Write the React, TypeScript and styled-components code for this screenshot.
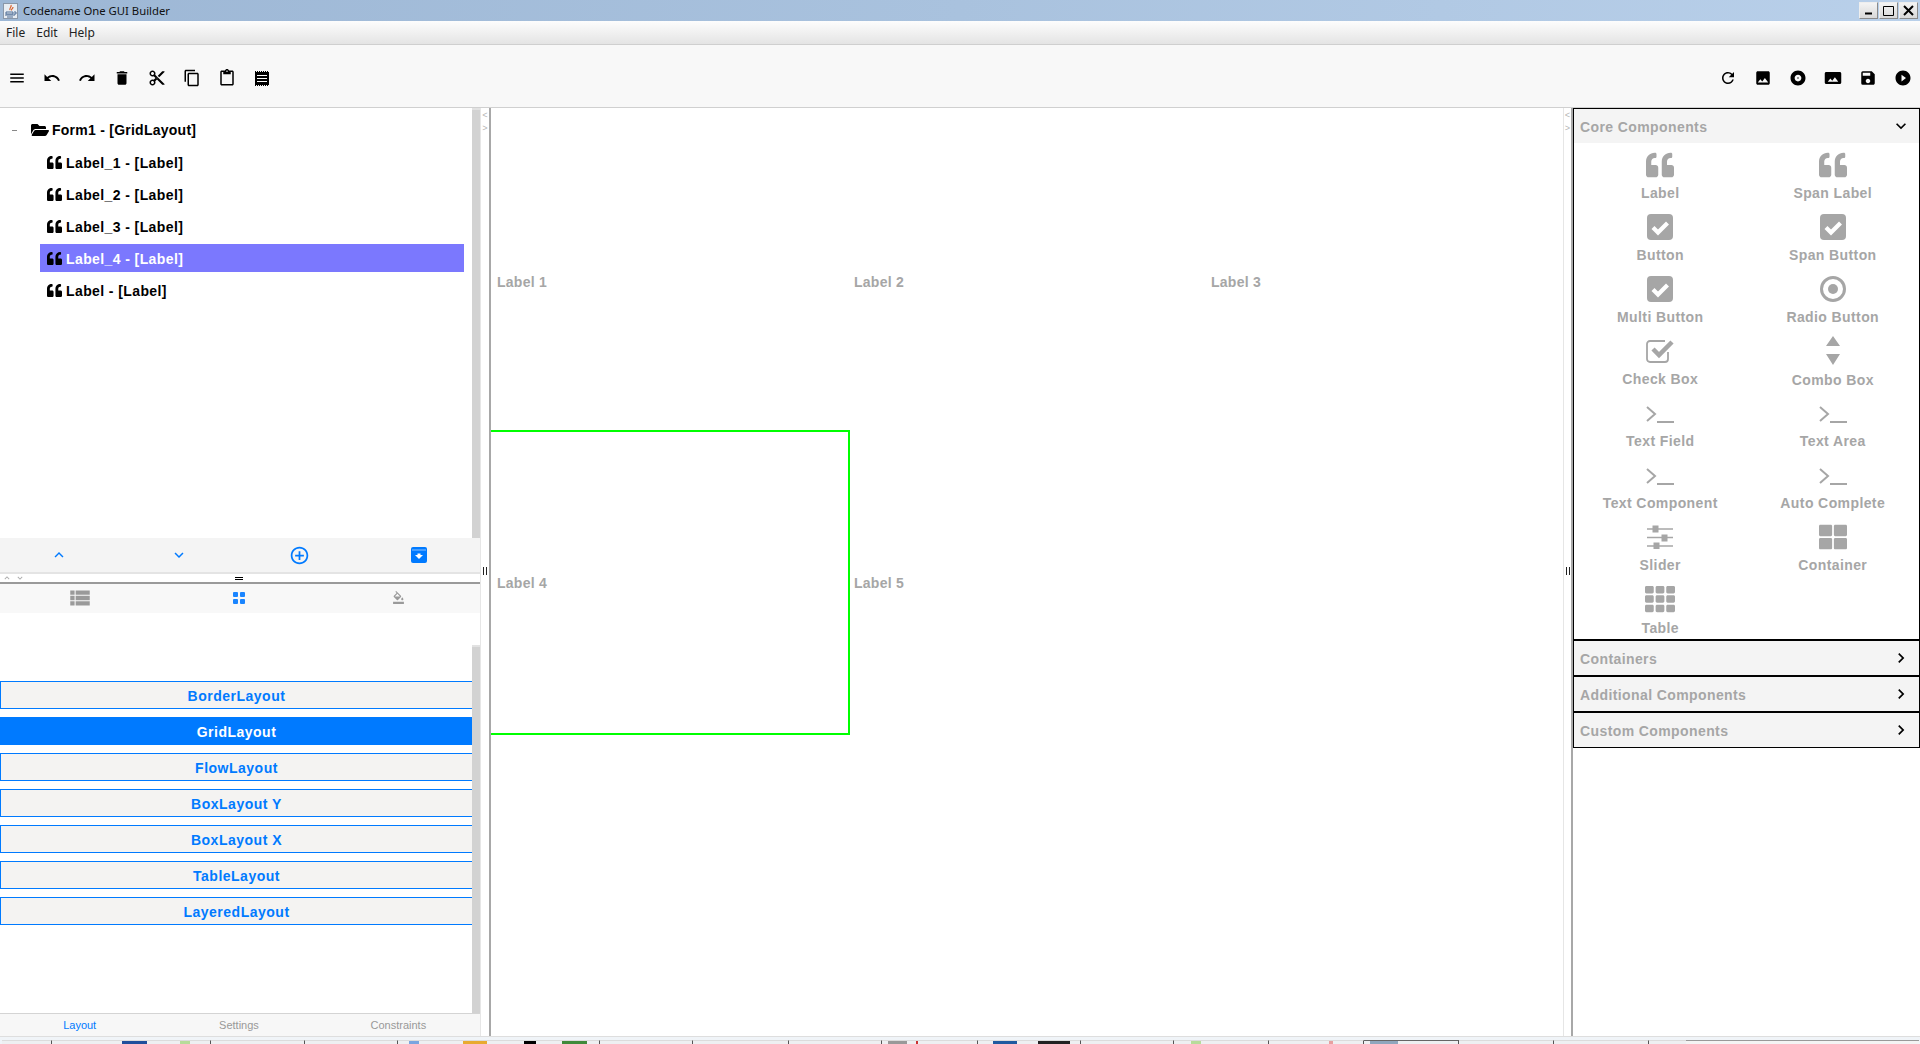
import React from 'react';
import styled, { createGlobalStyle } from 'styled-components';
import {
  MdMenu, MdUndo, MdRedo, MdDelete, MdContentCut, MdContentCopy, MdContentPaste,
  MdRefresh, MdPhoto, MdAlbum, MdPanorama, MdSave, MdPlayCircleFilled,
  MdKeyboardArrowUp, MdKeyboardArrowDown, MdKeyboardArrowRight, MdAddCircleOutline,
  MdViewList, MdFormatColorFill,
} from 'react-icons/md';
import { FaQuoteLeft, FaFolderOpen, FaThLarge, FaTh } from 'react-icons/fa';

const BLUE = '#007aff';
const GREY = '#a6a6a6';

const GlobalStyle = createGlobalStyle`
  html, body { margin: 0; padding: 0; background: #fff; overflow: hidden; }
  * { box-sizing: border-box; }
`;

const Window = styled.div`
  width: 1920px;
  height: 1044px;
  display: flex;
  flex-direction: column;
  overflow: hidden;
  font-family: "Liberation Sans", Arial, sans-serif;
`;

const TitleBar = styled.div`
  height: 21px;
  flex: none;
  display: flex;
  align-items: center;
  padding: 0 2px 0 3px;
  background: linear-gradient(to right, #9db7d5, #a9c2de 50%, #b9d0ea);
`;

const TitleText = styled.span`
  margin-left: 5px;
  flex: 1;
  font: 11.3px "Noto Sans", sans-serif;
  color: #111;
`;

const WinButtons = styled.div`
  display: flex;
  gap: 1px;
`;

const WinButton = styled.div`
  width: 19px;
  height: 17px;
  display: flex;
  align-items: center;
  justify-content: center;
  background: linear-gradient(#f4f4f4, #d8d8d8);
  border: 1px solid #8a8a8a;
  border-top-color: #eee;
  border-left-color: #eee;
`;

const MenuBar = styled.div`
  height: 24px;
  flex: none;
  display: flex;
  align-items: center;
  gap: 11px;
  padding-left: 6px;
  background: linear-gradient(#fdfdfd, #e4e4e4);
  border-bottom: 1px solid #cfcfcf;
  font: 12px "Noto Sans", sans-serif;
  color: #222;
`;

const Toolbar = styled.div`
  height: 63px;
  flex: none;
  display: flex;
  align-items: center;
  justify-content: space-between;
  padding: 4px 8px 0 8px;
  background: #f8f8f8;
  border-bottom: 1px solid #d0d0d0;
`;

const ToolGroup = styled.div`
  display: flex;
  gap: 17px;
`;

const ToolIcon = styled.span`
  width: 18px;
  height: 18px;
  display: flex;
  align-items: center;
  justify-content: center;
  font-size: 18px;
  color: #000;
`;

const Body = styled.div`
  flex: 1;
  min-height: 0;
  display: flex;
`;

const LeftPanel = styled.div`
  width: 480px;
  flex: none;
  display: flex;
  flex-direction: column;
`;

const TreeArea = styled.div`
  height: 430px;
  flex: none;
  display: flex;
`;

const Tree = styled.div`
  flex: 1;
  display: flex;
  flex-direction: column;
  gap: 4px;
  padding: 6px 8px 0 0;
`;

const RootRow = styled.div`
  height: 30px;
  display: flex;
  align-items: center;
  padding: 2px 0 0 12px;
  font-size: 14px;
  font-weight: bold;
  letter-spacing: 0.25px;
  color: #000;
`;

const Toggle = styled.span`
  width: 5px;
  height: 1px;
  margin-right: 14px;
  background: #888;
`;

const TreeRow = styled.div<{ $selected?: boolean }>`
  height: 28px;
  margin-left: 40px;
  display: flex;
  align-items: center;
  padding: 1px 0 0 7px;
  gap: 4px;
  font-size: 14px;
  font-weight: bold;
  letter-spacing: 0.4px;
  color: ${(p) => (p.$selected ? '#fff' : '#000')};
  background: ${(p) => (p.$selected ? '#7b78fe' : 'transparent')};
`;

const TreeIcon = styled.span`
  display: flex;
  font-size: 15px;
  color: #000;
`;

const FolderIcon = styled(TreeIcon)`
  font-size: 18px;
  margin-right: 3px;
`;

const ScrollTrack = styled.div<{ $top?: number }>`
  width: 8px;
  flex: none;
  padding-top: ${(p) => p.$top || 0}px;
  display: flex;
`;

const ScrollThumb = styled.div`
  flex: 1;
  background: #d2d2d2;
  border-top: 2px solid #e2e2e2;
`;

const ActionBar = styled.div`
  height: 34px;
  flex: none;
  display: grid;
  grid-template-columns: repeat(4, 1fr);
  background: #f4f4f4;
`;

const TabBar = styled.div`
  height: 29px;
  flex: none;
  display: grid;
  grid-template-columns: repeat(3, 1fr);
  padding: 0 2px 2px 0;
  background: #f8f8f8;
`;

const ActionCell = styled.div<{ $size: number }>`
  display: flex;
  align-items: center;
  justify-content: center;
  padding-right: 2px;
  color: ${BLUE};
  font-size: ${(p) => p.$size}px;
`;

const TabCell = styled.div<{ $color: string; $size: number }>`
  display: flex;
  align-items: center;
  justify-content: center;
  color: ${(p) => p.$color};
  font-size: ${(p) => p.$size}px;
`;

const HSplitter = styled.div`
  height: 12px;
  flex: none;
  display: flex;
  align-items: center;
  padding-left: 2px;
  gap: 3px;
  border-top: 2px solid #e4e4e4;
  border-bottom: 2px solid #9a9a9a;
  color: #aaa;
  font-size: 10px;
`;

const GripH = styled.span`
  width: 8px;
  height: 3px;
  margin-left: 207px;
  border-top: 1px solid #000;
  border-bottom: 1px solid #000;
`;

const LayoutArea = styled.div`
  flex: 1;
  min-height: 0;
  display: flex;
`;

const LayoutList = styled.div`
  flex: 1;
  display: flex;
  flex-direction: column;
  gap: 8px;
  padding-top: 68px;
`;

const LayoutButton = styled.div<{ $active?: boolean }>`
  height: 28px;
  display: flex;
  align-items: center;
  justify-content: center;
  padding-top: 1px;
  font-size: 14px;
  font-weight: bold;
  letter-spacing: 0.5px;
  color: ${(p) => (p.$active ? '#fff' : BLUE)};
  background: ${(p) => (p.$active ? BLUE : '#f4f3f2')};
  border: 1px solid ${BLUE};
  border-right: none;
`;

const BottomTabs = styled.div`
  height: 23px;
  flex: none;
  display: grid;
  grid-template-columns: repeat(3, 1fr);
  padding-right: 2px;
  background: #f7f7f7;
  border-top: 1px solid #d4d4d4;
`;

const BottomTab = styled.div<{ $active?: boolean }>`
  display: flex;
  align-items: center;
  justify-content: center;
  font-size: 11px;
  color: ${(p) => (p.$active ? BLUE : '#999')};
`;

const VSplitter = styled.div<{ $width: number }>`
  width: ${(p) => p.$width}px;
  flex: none;
  display: flex;
  flex-direction: column;
  align-items: center;
  padding-top: 2px;
  border-left: 1px solid #e6e6e6;
  border-right: 2px solid #a8a8a8;
  color: #b5b5b5;
  font: 9px/13px "Liberation Mono", monospace;
`;

const GripV = styled.span`
  width: 4px;
  height: 8px;
  margin-top: 431px;
  border-left: 1px solid #222;
  border-right: 1px solid #222;
`;

const Canvas = styled.div`
  flex: 1;
  min-width: 0;
  display: grid;
  grid-template-columns: repeat(3, 357px);
  grid-auto-rows: 305px;
  padding-top: 17px;
`;

const Cell = styled.div<{ $selected?: boolean; $firstRow?: boolean }>`
  display: flex;
  align-items: center;
  padding: ${(p) => (p.$firstRow ? 9 : 0)}px 0 0 6px;
  margin-right: ${(p) => (p.$selected ? -2 : 0)}px;
  border: 2px solid ${(p) => (p.$selected ? '#00ff00' : 'transparent')};
  border-left: none;
  font-size: 14px;
  font-weight: bold;
  letter-spacing: 0.25px;
  color: ${GREY};
`;

const RightPanel = styled.div`
  width: 347px;
  flex: none;
`;

const Accordion = styled.div`
  border: 1px solid #000;
  border-bottom: none;
`;

const Section = styled.div`
  border-bottom: 2px solid #000;
  &:last-child { border-bottom-width: 1px; }
`;

const SectionHeader = styled.div`
  height: 34px;
  display: flex;
  align-items: center;
  justify-content: space-between;
  padding: 1px 8px 0 6px;
  background: #f4f4f4;
  font-size: 14px;
  font-weight: bold;
  letter-spacing: 0.4px;
  color: ${GREY};
`;

const Chevron = styled.span`
  display: flex;
  margin-top: -2px;
  font-size: 20px;
  color: #000;
`;

const Palette = styled.div`
  display: grid;
  grid-template-columns: 1fr 1fr;
  row-gap: 10px;
  padding: 7px 0 3px;
`;

const PaletteItem = styled.div`
  height: 52px;
  display: flex;
  flex-direction: column;
  align-items: center;
`;

const PaletteIcon = styled.div`
  height: 30px;
  display: flex;
  align-items: center;
  justify-content: center;
  font-size: 28px;
  color: ${GREY};
`;

const PaletteLabel = styled.div`
  margin-top: 5px;
  line-height: 18px;
  font-size: 14px;
  font-weight: bold;
  letter-spacing: 0.4px;
  color: ${GREY};
`;

const TaskBar = styled.div`
  height: 8px;
  flex: none;
  display: flex;
  align-items: flex-end;
  padding-left: 2px;
  background: #f0f4f8;
  border-top: 1px solid #dedede;
`;

const TaskButton = styled.div<{ $width: number; $kind: string }>`
  width: ${(p) => p.$width}px;
  height: 4px;
  flex: none;
  display: flex;
  background: ${(p) => (p.$kind === 'tray' ? '#f4f4f4' : '#eef0f2')};
  border-top: 1px solid ${(p) => (p.$kind === 'active' ? '#666' : p.$kind === 'tray' ? '#999' : '#dcdcdc')};
  border-right: ${(p) => (p.$kind === 'tray' || p.$kind === 'plain' ? 'none' : '1px solid #555')};
`;

const TaskTip = styled.span<{ $gap: number; $width: number; $color: string }>`
  margin-left: ${(p) => p.$gap}px;
  width: ${(p) => p.$width}px;
  background: ${(p) => p.$color};
`;

// small drawings that the icon packages don't have
const JavaIcon = () => (
  <svg width="15" height="16" viewBox="0 0 15 16">
    <rect x="0.5" y="0.5" width="14" height="15" fill="#e8edf3" stroke="#8a97a8" />
    <path d="M8 2c1 2-2 3-1 5M10 4c0 2-2 2-1.5 3.5" stroke="#d9602a" strokeWidth="1.2" fill="none" />
    <path d="M3 9h7v2H3zM2 12h10M4 14h6M11 9h2v2h-2" stroke="#4a6a94" fill="none" />
  </svg>
);

const ChipIcon = () => (
  <svg width="14" height="15" viewBox="0 0 14 15">
    <rect y="1" width="14" height="13" fill="#000" />
    <path d="M2 4.500h10M2 7.500h10M2 10.500h10" stroke="#fff" strokeWidth="1" />
    <path d="M0 .5h14M0 14.500h14" stroke="#000" strokeDasharray="1 1" />
  </svg>
);

const ArchiveIcon = () => (
  <svg width="16" height="16" viewBox="0 0 16 16">
    <rect width="16" height="16" rx="2" fill={BLUE} />
    <path d="M1 3h14" stroke="#8cc2ff" />
    <path d="M8 12l-4-4h2.500V6.500h3V8H12z" fill="#fff" />
  </svg>
);

const DotsIcon = () => (
  <svg width="12" height="12" viewBox="0 0 12 12" fill="#1a85ff">
    <rect width="5" height="5" rx="1" />
    <rect x="7" width="5" height="5" rx="1" />
    <rect y="7" width="5" height="5" rx="1" />
    <rect x="7" y="7" width="5" height="5" rx="1" />
  </svg>
);

const CheckFilled = () => (
  <svg width="26" height="26" viewBox="0 0 26 26">
    <rect width="26" height="26" rx="4" fill={GREY} />
    <path d="M6 13.500l5 5 9.500-9.500" stroke="#fff" strokeWidth="4.200" fill="none" />
  </svg>
);

const CheckOutline = () => (
  <svg width="28" height="24" viewBox="0 0 28 24">
    <path d="M22 13v7a3 3 0 0 1-3 3H4a3 3 0 0 1-3-3V5a3 3 0 0 1 3-3h15" stroke={GREY} strokeWidth="1.800" fill="none" />
    <path d="M7 10l6 6L26 3" stroke={GREY} strokeWidth="4.500" fill="none" />
  </svg>
);

const RadioIcon = () => (
  <svg width="26" height="26" viewBox="0 0 26 26">
    <circle cx="13" cy="13" r="11.500" stroke={GREY} strokeWidth="3" fill="none" />
    <circle cx="13" cy="13" r="5" fill={GREY} />
  </svg>
);

const ComboIcon = () => (
  <svg width="14" height="30" viewBox="0 0 14 30" fill={GREY}>
    <path d="M7 0l7 10H0zM0 18h14L7 29z" />
  </svg>
);

const TerminalIcon = () => (
  <svg width="28" height="20" viewBox="0 0 28 20" fill="none" stroke={GREY} strokeWidth="2" style={{ marginTop: 4 }}>
    <path d="M1 2l8 7-8 7M11 17h17" />
  </svg>
);

const SliderIcon = () => (
  <svg width="26" height="24" viewBox="0 0 26 24" fill={GREY} stroke={GREY}>
    <path d="M0 4h26M0 12.500h26M0 21h26" strokeWidth="1.400" />
    <rect x="6" y="1" width="5" height="6" />
    <rect x="15" y="10" width="5" height="6" />
    <rect x="7" y="18" width="5" height="6" />
  </svg>
);

const MinIcon = () => (
  <svg width="9" height="9" viewBox="0 0 9 9"><path d="M1 7.500h7" stroke="#000" strokeWidth="2" /></svg>
);
const MaxIcon = () => (
  <svg width="11" height="11" viewBox="0 0 11 11"><path d="M.5 1.500h10v9H.5z" stroke="#000" fill="none" /></svg>
);
const CloseIcon = () => (
  <svg width="11" height="11" viewBox="0 0 11 11"><path d="M1 1l9 9M10 1l-9 9" stroke="#000" strokeWidth="2" /></svg>
);

const treeItems = ['Label_1', 'Label_2', 'Label_3', 'Label_4', 'Label'];
const layouts = ['BorderLayout', 'GridLayout', 'FlowLayout', 'BoxLayout Y', 'BoxLayout X', 'TableLayout', 'LayeredLayout'];
const cells = ['Label 1', 'Label 2', 'Label 3', 'Label 4', 'Label 5'];
const collapsed = ['Containers', 'Additional Components', 'Custom Components'];

const palette: { label: string; icon: React.ReactNode }[] = [
  { label: 'Label', icon: <FaQuoteLeft /> },
  { label: 'Span Label', icon: <FaQuoteLeft /> },
  { label: 'Button', icon: <CheckFilled /> },
  { label: 'Span Button', icon: <CheckFilled /> },
  { label: 'Multi Button', icon: <CheckFilled /> },
  { label: 'Radio Button', icon: <RadioIcon /> },
  { label: 'Check Box', icon: <CheckOutline /> },
  { label: 'Combo Box', icon: <ComboIcon /> },
  { label: 'Text Field', icon: <TerminalIcon /> },
  { label: 'Text Area', icon: <TerminalIcon /> },
  { label: 'Text Component', icon: <TerminalIcon /> },
  { label: 'Auto Complete', icon: <TerminalIcon /> },
  { label: 'Slider', icon: <SliderIcon /> },
  { label: 'Container', icon: <FaThLarge /> },
  { label: 'Table', icon: <FaTh size={30} /> },
];

const leftTools = [MdMenu, MdUndo, MdRedo, MdDelete, MdContentCut, MdContentCopy, MdContentPaste, ChipIcon];
const rightTools = [MdRefresh, MdPhoto, MdAlbum, MdPanorama, MdSave, MdPlayCircleFilled];

type Tip = [number, number, string];
const tasks: { width: number; kind: string; tips?: Tip[] }[] = [
  { width: 50, kind: 'normal' },
  { width: 159, kind: 'normal', tips: [[70, 25, '#1f4f9c'], [33, 10, '#b7dc9a']] },
  { width: 94, kind: 'normal' },
  { width: 93, kind: 'normal' },
  { width: 202, kind: 'normal', tips: [[11, 10, '#7aa5e0'], [44, 24, '#e8aa30'], [37, 12, '#000'], [26, 25, '#3f8a3a']] },
  { width: 93, kind: 'normal' },
  { width: 96, kind: 'normal' },
  { width: 93, kind: 'normal' },
  { width: 96, kind: 'normal', tips: [[6, 19, '#999'], [9, 2, '#c33']] },
  { width: 103, kind: 'normal', tips: [[15, 24, '#1f5aa0'], [21, 32, '#222']] },
  { width: 93, kind: 'normal' },
  { width: 95, kind: 'normal', tips: [[17, 10, '#b7dc9a']] },
  { width: 95, kind: 'normal', tips: [[60, 4, '#e8a0a0']] },
  { width: 95, kind: 'active', tips: [[6, 28, '#8fa6bd']] },
  { width: 95, kind: 'normal' },
  { width: 95, kind: 'normal' },
  { width: 37, kind: 'plain' },
  { width: 233, kind: 'tray' },
];

export default function App() {
  return (
    <Window>
      <GlobalStyle />
      <TitleBar>
        <JavaIcon />
        <TitleText>Codename One GUI Builder</TitleText>
        <WinButtons>
          <WinButton><MinIcon /></WinButton>
          <WinButton><MaxIcon /></WinButton>
          <WinButton><CloseIcon /></WinButton>
        </WinButtons>
      </TitleBar>
      <MenuBar>
        <span>File</span>
        <span>Edit</span>
        <span>Help</span>
      </MenuBar>
      <Toolbar>
        <ToolGroup>
          {leftTools.map((Icon, i) => (
            <ToolIcon key={i}><Icon /></ToolIcon>
          ))}
        </ToolGroup>
        <ToolGroup>
          {rightTools.map((Icon, i) => (
            <ToolIcon key={i}><Icon /></ToolIcon>
          ))}
        </ToolGroup>
      </Toolbar>
      <Body>
        <LeftPanel>
          <TreeArea>
            <Tree>
              <RootRow>
                <Toggle />
                <FolderIcon><FaFolderOpen /></FolderIcon>
                Form1 - [GridLayout]
              </RootRow>
              {treeItems.map((name) => (
                <TreeRow key={name} $selected={name === 'Label_4'}>
                  <TreeIcon><FaQuoteLeft /></TreeIcon>
                  {name} - [Label]
                </TreeRow>
              ))}
            </Tree>
            <ScrollTrack><ScrollThumb /></ScrollTrack>
          </TreeArea>
          <ActionBar>
            <ActionCell $size={18}><MdKeyboardArrowUp /></ActionCell>
            <ActionCell $size={18}><MdKeyboardArrowDown /></ActionCell>
            <ActionCell $size={21}><MdAddCircleOutline /></ActionCell>
            <ActionCell $size={18}><ArchiveIcon /></ActionCell>
          </ActionBar>
          <HSplitter>
            <MdKeyboardArrowUp />
            <MdKeyboardArrowDown />
            <GripH />
          </HSplitter>
          <TabBar>
            <TabCell $color="#9a9a9a" $size={26}><MdViewList /></TabCell>
            <TabCell $color="#1a85ff" $size={18}><DotsIcon /></TabCell>
            <TabCell $color="#9a9a9a" $size={13}><MdFormatColorFill /></TabCell>
          </TabBar>
          <LayoutArea>
            <LayoutList>
              {layouts.map((name) => (
                <LayoutButton key={name} $active={name === 'GridLayout'}>{name}</LayoutButton>
              ))}
            </LayoutList>
            <ScrollTrack $top={32}><ScrollThumb /></ScrollTrack>
          </LayoutArea>
          <BottomTabs>
            <BottomTab $active>Layout</BottomTab>
            <BottomTab>Settings</BottomTab>
            <BottomTab>Constraints</BottomTab>
          </BottomTabs>
        </LeftPanel>
        <VSplitter $width={11}>
          <span>&lt;</span>
          <span>&gt;</span>
          <GripV />
        </VSplitter>
        <Canvas>
          {cells.map((text, i) => (
            <Cell key={text} $selected={i === 3} $firstRow={i < 3}>{text}</Cell>
          ))}
        </Canvas>
        <VSplitter $width={10}>
          <span>&lt;</span>
          <span>&gt;</span>
          <GripV />
        </VSplitter>
        <RightPanel>
          <Accordion>
            <Section>
              <SectionHeader>
                Core Components
                <Chevron><MdKeyboardArrowDown /></Chevron>
              </SectionHeader>
              <Palette>
                {palette.map((item) => (
                  <PaletteItem key={item.label}>
                    <PaletteIcon>{item.icon}</PaletteIcon>
                    <PaletteLabel>{item.label}</PaletteLabel>
                  </PaletteItem>
                ))}
              </Palette>
            </Section>
            {collapsed.map((name) => (
              <Section key={name}>
                <SectionHeader>
                  {name}
                  <Chevron><MdKeyboardArrowRight /></Chevron>
                </SectionHeader>
              </Section>
            ))}
          </Accordion>
        </RightPanel>
      </Body>
      <TaskBar>
        {tasks.map((task, i) => (
          <TaskButton key={i} $width={task.width} $kind={task.kind}>
            {(task.tips || []).map(([gap, width, color], j) => (
              <TaskTip key={j} $gap={gap} $width={width} $color={color} />
            ))}
          </TaskButton>
        ))}
      </TaskBar>
    </Window>
  );
}
